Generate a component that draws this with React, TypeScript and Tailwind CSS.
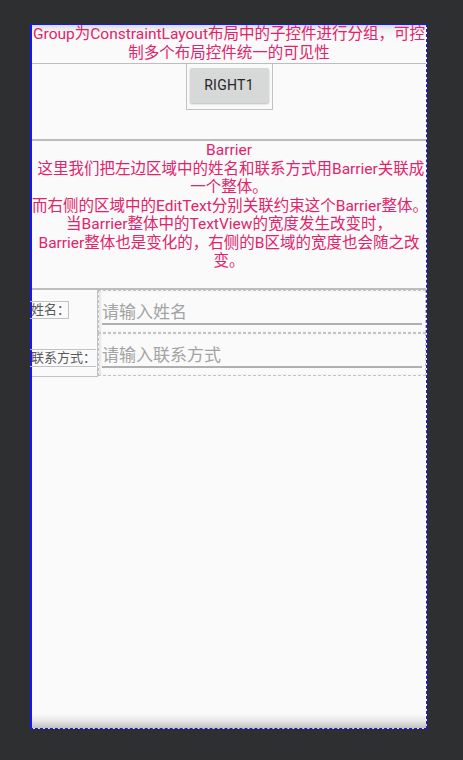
import React from "react";

// Android layout preview: Group + Barrier demo inside a device frame
const pink = "text-[#e2236a]";

const titleLines = [
  "Group为ConstraintLayout布局中的子控件进行分组，可控",
  "制多个布局控件统一的可见性",
];

const barrierLines = [
  "Barrier",
  " 这里我们把左边区域中的姓名和联系方式用Barrier关联成",
  "一个整体。",
  "而右侧的区域中的EditText分别关联约束这个Barrier整体。",
  "当Barrier整体中的TextView的宽度发生改变时，",
  "Barrier整体也是变化的，右侧的B区域的宽度也会随之改",
  "变。",
];

function EditField({ hint }: { hint: string }) {
  return (
    <div className="h-[43px] border border-dashed border-[#c4c4c4] px-[3px] shadow-[inset_2px_0_2px_rgba(0,0,0,0.08)]">
      <div className="mt-[11px] h-[20px] text-[17px] leading-[20px] text-[#a3a3a3] whitespace-nowrap">
        {hint}
      </div>
      <div className="mt-[1px] h-[2px] bg-[#b0b0b0]" />
    </div>
  );
}

export default function App() {
  return (
    <div className="w-[463px] h-[760px] bg-[#2e2f31] pt-[24px] pl-[30px] overflow-hidden font-['Roboto','Noto_Sans_CJK_SC',sans-serif]">
      <div className="w-[397px] h-[705px] flex flex-col border-t border-r border-b border-l-2 border-[#1515ff] [border-right-style:dashed] [border-bottom-style:dashed] bg-[linear-gradient(to_bottom,#dcdcdc_0px,#f4f4f4_6px,#fafafa_12px,#fafafa_689px,#e6e6e6_696px,#bcbcbc_704px)]">
        {/* Group title */}
        <div className={`h-[39px] border-b border-[#bdbdbd] text-center text-[15.5px] leading-[18.5px] ${pink}`}>
          {titleLines.map((l) => (
            <div key={l} className="whitespace-nowrap">{l}</div>
          ))}
        </div>

        {/* Button area */}
        <div className="h-[77px] border-b-2 border-[#bdbdbd] flex justify-center">
          <div className="w-[87px] h-[46px] border-x border-b border-[#c2c2c2] pt-[4px] px-[3px] pb-[5px]">
            <div className="w-[79px] h-[35px] rounded-[2px] bg-[#d7d8d8] shadow-[0_1px_2px_rgba(0,0,0,0.25)] flex items-center justify-center text-[14px] text-[#262626] tracking-[0.02em]">
              RIGHT1
            </div>
          </div>
        </div>

        {/* Barrier description */}
        <div className={`h-[149px] border-b-2 border-[#bdbdbd] text-center text-[15.5px] leading-[18.5px] ${pink}`}>
          {barrierLines.map((l, i) => (
            <div key={i} className="whitespace-pre">{l}</div>
          ))}
        </div>

        {/* Barrier form */}
        <div className="flex">
          <div className="w-[66px] h-[87px] border-r border-b border-[#c2c2c2] flex flex-col text-[13px] text-[#5a5a5a]">
            <div className="mt-[11px] w-[39px] h-[18px] border-y border-r border-[#c2c2c2] leading-[16px] -ml-[2px] pl-[1px] whitespace-nowrap">
              姓名：
            </div>
            <div className="mt-[30px] w-[66px] h-[18px] border-y border-[#c2c2c2] leading-[16px] -ml-[2px] pl-[1px] whitespace-nowrap">
              联系方式：
            </div>
          </div>
          <div className="flex-1 flex flex-col">
            <EditField hint="请输入姓名" />
            <EditField hint="请输入联系方式" />
          </div>
        </div>
      </div>
    </div>
  );
}
